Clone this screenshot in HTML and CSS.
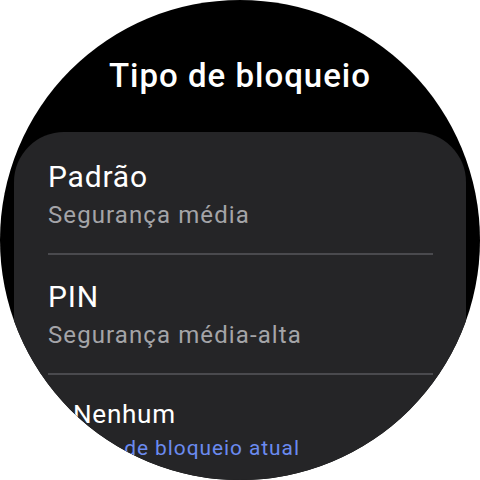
FILE: index.html
```html
<!DOCTYPE html>
<html lang="pt">
<head>
    <meta charset="UTF-8">
    <meta name="viewport" content="width=device-width, initial-scale=1.0">
    <title>Tipo de bloqueio</title>
    <link rel="stylesheet" href="styles.css">
</head>
<body>
    <div class="watch">
        <h1 class="title">Tipo de bloqueio</h1>
        <div class="card">
            <div class="item">
                <div class="item-text">
                    <div class="item-title">Padrão</div>
                    <div class="item-sub">Segurança média</div>
                </div>
            </div>
            <div class="item">
                <div class="item-text">
                    <div class="item-title">PIN</div>
                    <div class="item-sub">Segurança média-alta</div>
                </div>
            </div>
            <!-- item perto da borda: encolhido como na lista do relógio -->
            <div class="item edge">
                <div class="item-text">
                    <div class="item-title">Nenhum</div>
                    <div class="item-sub current">Tipo de bloqueio atual</div>
                </div>
            </div>
        </div>
    </div>
</body>
</html>
```

FILE: styles.css
```css
body {
    margin: 0;
    background-color: #ffffff;
    font-family: 'Roboto', 'Liberation Sans', sans-serif;
}
.watch {
    width: 480px;
    height: 480px;
    border-radius: 50%;
    overflow: hidden;
    background-color: #000000;
}
.title {
    margin: 0;
    padding-top: 56px;
    text-align: center;
    color: #ffffff;
    font-size: 33px;
    line-height: 40px;
    font-weight: 500;
    letter-spacing: 1px;
}
.card {
    margin: 36px 14px 0;
    height: 400px;
    padding-top: 3px;
    background-color: #252527;
    border-radius: 50px 50px 0 0;
}
.item {
    margin: 0 33px 0 34px;
    padding: 24px 0 20px;
    border-bottom: 2px solid #4a4a4e;
}
.item.edge {
    border-bottom: none;
}
.edge .item-text {
    transform: scale(0.87);
    transform-origin: 50% 0;
}
.item-title {
    color: #ffffff;
    font-size: 30px;
    line-height: 36px;
    letter-spacing: 0.8px;
}
.item-sub {
    margin-top: 2px;
    color: #a4a4a8;
    font-size: 24px;
    line-height: 36px;
    letter-spacing: 1.1px;
}
.item-sub.current {
    color: #6b8bf0;
}
```
